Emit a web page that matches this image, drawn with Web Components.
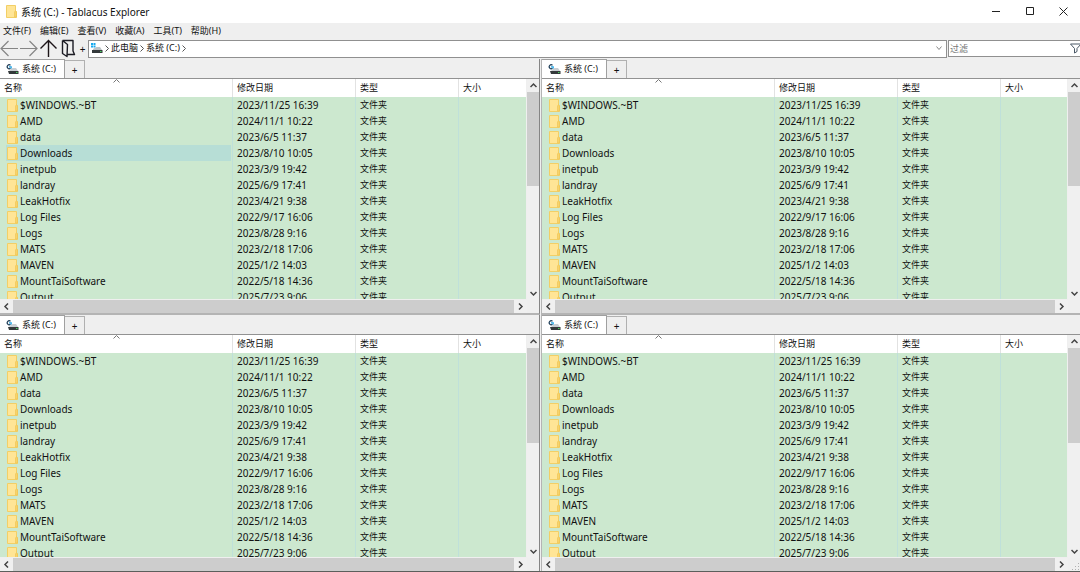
<!DOCTYPE html>
<html lang="zh-CN">
  <head>
    <meta charset="utf-8">
    <title>系统 (C:) - Tablacus Explorer</title>
    <style>
      html, body {
        height: 100%;
        margin: 0;
      }
      body {
        --face: #efefef;
        --line: #929292;
        --soft-line: #b4b4b4;
        --list: #cce8cf;
        --thumb: #cdcdcd;
        font: 9px/16px "Noto Sans", "Noto Sans CJK SC", sans-serif;
        color: #111;
        overflow: hidden;
      }
    </style>
  </head>
  <body>
    <template id="te-window-template">
      <style>
        :host {
          display: flex;
          flex-direction: column;
          height: 100vh;
          background: var(--face);
        }
        header {
          display: flex;
          align-items: center;
          height: 23px;
          padding-left: 6px;
          background: #fff;
        }
        h1 {
          flex: 1;
          margin: 0 0 0 4px;
          font-size: 10px;
          font-weight: normal;
        }
        button {
          width: 34px;
          height: 23px;
          padding: 0;
          border: 0;
          background: none;
        }
        button svg {
          display: block;
          margin: auto;
        }
        .panes {
          flex: 1;
          min-height: 0;
          display: grid;
          grid-template-columns: 1fr 1fr;
          grid-template-rows: 1fr 1fr;
          border-bottom: 1px solid #5c5f5c;
        }
      </style>
      <header>
        <te-icon name="folder"></te-icon>
        <h1><slot name="title"></slot></h1>
        <button aria-label="最小化"><svg width="9" height="9" viewBox="0 0 9 9"><path d="M1 4.5h8" stroke="#222"/></svg></button>
        <button aria-label="最大化"><svg width="9" height="9" viewBox="0 0 9 9"><path d="M1.500.5h7v7h-7z" fill="none" stroke="#222"/></svg></button>
        <button aria-label="关闭"><svg width="9" height="9" viewBox="0 0 9 9"><path d="M.5.5l8 8M8.500.5l-8 8" stroke="#222"/></svg></button>
      </header>
      <slot name="menu"></slot>
      <slot name="toolbar"></slot>
      <div class="panes"><slot></slot></div>
    </template>

    <template id="te-menubar-template">
      <style>
        :host { display: block; }
        nav {
          display: flex;
          gap: 9px;
          padding-left: 3px;
        }
        button {
          padding: 0;
          border: 0;
          background: none;
          font: inherit;
          color: inherit;
        }
      </style>
      <nav></nav>
    </template>

    <template id="te-toolbar-template">
      <style>
        :host {
          display: flex;
          align-items: flex-start;
          height: 20px;
        }
        button {
          padding: 0;
          border: 0;
          background: none;
          font: inherit;
          color: inherit;
        }
        .nav svg { display: block; }
        .plus {
          width: 11px;
          height: 19px;
          font-size: 10px;
        }
        .address {
          box-sizing: border-box;
          flex: 1;
          display: flex;
          align-items: center;
          height: 18px;
          margin-right: 1px;
          padding: 0 2px 2px 1px;
          border: 1px solid #909090;
          background: #fff;
        }
        a {
          color: inherit;
          text-decoration: none;
        }
        .address svg { margin: 0 2px; }
        .drop {
          margin-left: auto;
        }
        .filter {
          box-sizing: border-box;
          display: flex;
          align-items: center;
          width: 132px;
          height: 17px;
          border: 1px solid #909090;
          border-right: 0;
          background: #fff;
        }
        input {
          flex: 1;
          min-width: 0;
          padding: 0 1px;
          border: 0;
          background: none;
          font: inherit;
          outline: 0;
        }
        input::placeholder { color: #777; }
        .address, .filter { margin-top: 1px; }
      </style>
      <button class="nav" aria-label="后退"><svg width="20" height="19" viewBox="0 0 20 19"><path d="M8.500 2L1 9.500 8.500 17M1 9.500H18" fill="none" stroke="#858585" stroke-width="1.200"/></svg></button>
      <button class="nav" aria-label="前进"><svg width="19" height="19" viewBox="0 0 19 19"><path d="M9.500 2l7.500 7.500L9.500 17M17 9.500H0" fill="none" stroke="#858585" stroke-width="1.200"/></svg></button>
      <button class="nav" aria-label="向上"><svg width="20" height="19" viewBox="0 0 20 19"><path d="M1.500 9.500l8-8 8 8M9.500 1.500V18" fill="none" stroke="#1c1418" stroke-width="1.400"/></svg></button>
      <button class="nav" aria-label="文件夹"><svg width="18" height="19" viewBox="0 0 18 19"><path d="M3.500 1.500H14V12l1.500 3.500H8M3.500 1.500v13L8 17.500l.5-12-5-4" fill="none" stroke="#1c1c24" stroke-width="1.400" stroke-linejoin="round"/></svg></button>
      <button class="plus" aria-label="新建">+</button>
      <div class="address">
        <te-icon name="computer"></te-icon>
        <svg width="4" height="7" viewBox="0 0 4 7"><path d="M.5.5l3 3-3 3" fill="none" stroke="#555"/></svg>
        <a href="#pc">此电脑</a>
        <svg width="4" height="7" viewBox="0 0 4 7"><path d="M.5.5l3 3-3 3" fill="none" stroke="#555"/></svg>
        <a href="#c">系统 (C:)</a>
        <svg width="4" height="7" viewBox="0 0 4 7"><path d="M.5.5l3 3-3 3" fill="none" stroke="#555"/></svg>
        <button class="drop" aria-label="地址历史"><svg width="6" height="5" viewBox="0 0 6 5"><path d="M.5.5L3 3.500 5.500.5" fill="none" stroke="#888"/></svg></button>
      </div>
      <label class="filter">
        <input type="text" placeholder="过滤" aria-label="过滤">
        <svg width="10" height="11" viewBox="0 0 10 11"><path d="M.5 1h10.500L7 5.500V8.500L4.500 10V5.500z" fill="none" stroke="#4a5866"/></svg>
      </label>
    </template>

    <template id="te-icon-template">
      <style>
        :host { display: inline-block; }
        svg { display: block; }
      </style>
    </template>

    <template id="te-scrollbar-template">
      <style>
        :host {
          display: flex;
          background: #f0f0f0;
        }
        :host([vertical]) {
          flex-direction: column;
        }
        button {
          display: grid;
          place-items: center;
          width: 13px;
          height: 12px;
          padding: 0;
          border: 0;
          background: none;
        }
        :host([vertical]) button {
          width: 100%;
          height: 13px;
        }
        .track {
          flex: 1;
          display: flex;
          flex-direction: inherit;
        }
        .thumb {
          flex-basis: var(--size, 100%);
          background: var(--thumb);
        }
        path {
          fill: none;
          stroke: #444;
          stroke-width: 1.5;
        }
      </style>
      <button class="less"><svg width="7" height="7" viewBox="0 0 7 7"><path/></svg></button>
      <div class="track"><div class="thumb"></div></div>
      <button class="more"><svg width="7" height="7" viewBox="0 0 7 7"><path/></svg></button>
    </template>

    <template id="te-pane-template">
      <style>
        :host {
          display: flex;
          flex-direction: column;
          min-width: 0;
          min-height: 0;
          box-sizing: border-box;
          border-bottom: 2px solid var(--soft-line);
        }
        :host([side="left"]) {
          border-right: 1px solid #858585;
        }
        :host([side="right"]) {
          border-left: 1px solid var(--soft-line);
          margin-left: 1px;
        }
        :host([last]) {
          border-bottom: 0;
        }
        .tabs {
          display: flex;
          align-items: flex-end;
          height: 19px;
          border-bottom: 1px solid var(--line);
        }
        .tabs button {
          box-sizing: border-box;
          padding: 0;
          font: inherit;
          color: inherit;
        }
        .tab {
          display: flex;
          align-items: center;
          gap: 3px;
          width: 65px;
          height: 19px;
          border: solid #a0a0a0;
          border-width: 1px 1px 0 0;
          background: #fff;
        }
        .tabs .tab { padding-left: 6px; }
        .tabs .add {
          width: 20px;
          height: 18px;
          border: 1px solid #b0b0b0;
          border-left: 0;
          border-bottom: 0;
          background: var(--face);
          font-size: 10px;
        }
        .view {
          flex: 1;
          min-height: 0;
          display: grid;
          grid-template-columns: 1fr 12px;
          grid-template-rows: 1fr 13px;
        }
        .list {
          overflow: hidden;
          margin: 0 1px 1px 0;
          background: var(--list);
        }
        table {
          width: 100%;
          table-layout: fixed;
          border-collapse: separate;
          border-spacing: 0;
        }
        th, td { box-sizing: border-box; }
        .name { width: 233px; }
        .date { width: 123px; }
        .type { width: 103px; }
        th {
          position: relative;
          height: 18px;
          padding: 0 0 0 4px;
          border-right: 1px solid #e2e2e2;
          background: #fff;
          font-weight: normal;
          text-align: left;
        }
        th:last-child, td:last-child { border-right: 0; }
        .sort {
          position: absolute;
          top: 0;
          left: 50%;
          margin-left: -3px;
        }
        td {
          height: 16px;
          padding: 0 0 0 4px;
          border-right: 1px solid #bfe0da;
          white-space: nowrap;
        }
        td:first-child { padding: 0 1px 0 6px; }
        .latin { font-size: 10px; }
        .item {
          display: flex;
          align-items: center;
          gap: 2px;
          height: 16px;
          padding-left: 1px;
        }
        .item.on { background: #b7ded6; }
        .corner {
          display: flex;
          align-items: flex-end;
          justify-content: flex-end;
        }
      </style>
      <div class="tabs">
        <button class="tab"><te-icon name="drive"></te-icon><slot></slot></button>
        <button class="add" aria-label="新标签">+</button>
      </div>
      <div class="view">
        <div class="list">
          <table>
            <thead>
              <tr>
                <th class="name">名称<svg class="sort" width="7" height="4" viewBox="0 0 7 4"><path d="M.5 3.500l3-3 3 3" fill="none" stroke="#777"/></svg></th>
                <th class="date">修改日期</th>
                <th class="type">类型</th>
                <th>大小</th>
              </tr>
            </thead>
            <tbody></tbody>
          </table>
        </div>
        <te-scrollbar vertical style="--size: 48%"></te-scrollbar>
        <te-scrollbar></te-scrollbar>
        <div class="corner"></div>
      </div>
    </template>

    <te-window>
      <span slot="title">系统 (C:) - Tablacus Explorer</span>
      <te-menubar slot="menu" items="文件(F),编辑(E),查看(V),收藏(A),工具(T),帮助(H)"></te-menubar>
      <te-toolbar slot="toolbar"></te-toolbar>
      <te-pane side="left" selected="Downloads">系统 (C:)</te-pane>
      <te-pane side="right">系统 (C:)</te-pane>
      <te-pane side="left" last>系统 (C:)</te-pane>
      <te-pane side="right" last grip>系统 (C:)</te-pane>
    </te-window>

    <script>
      const FILES = [
        ['$WINDOWS.~BT', '2023/11/25 16:39'],
        ['AMD', '2024/11/1 10:22'],
        ['data', '2023/6/5 11:37'],
        ['Downloads', '2023/8/10 10:05'],
        ['inetpub', '2023/3/9 19:42'],
        ['landray', '2025/6/9 17:41'],
        ['LeakHotfix', '2023/4/21 9:38'],
        ['Log Files', '2022/9/17 16:06'],
        ['Logs', '2023/8/28 9:16'],
        ['MATS', '2023/2/18 17:06'],
        ['MAVEN', '2025/1/2 14:03'],
        ['MountTaiSoftware', '2022/5/18 14:36'],
        ['Output', '2025/7/23 9:06']
      ];

      const ICONS = {
        folder: '<svg width="11" height="13" viewBox="0 0 11 13"><path d="M.5.5h9v5l1 1.500v5.500H.5z" fill="#ffe596" stroke="#f2cf66"/><path d="M8.500 12V7l1-1.500 1 1.500v5z" fill="#f7d36c" stroke="#eec351" stroke-width=".6"/></svg>',
        drive: '<svg width="13" height="12" viewBox="0 0 13 12"><path d="M4.500 2.200A2 2 0 1 0 4.500 5.300" fill="none" stroke="#1b3a55" stroke-width="1.200"/><path d="M3 3.800h2.200v2" fill="none" stroke="#20a5e8" stroke-width="1.200"/><path d="M6.500 5H10l2 3H3.500V7z" fill="#c9ced2"/><path d="M2 8h10.500v3H3z" fill="#34393b"/><path d="M10 9h1.500v1H10z" fill="#48d75e"/></svg>',
        computer: '<svg width="13" height="12" viewBox="0 0 13 12"><path d="M1 1h2v2H1zM3.500 1h2v2h-2zM1 3.500h2v2H1zM3.500 3.500h2v2h-2z" fill="#17a9ee"/><path d="M6.500 5H10l2 3H3V7z" fill="#bcc2c6"/><path d="M2 8h10.500v3H2z" fill="#34393b"/><path d="M10 9h1.500v1H10z" fill="#48d75e"/></svg>'
      };

      const ARROWS = {
        left: 'M5 .5l-3 3 3 3',
        right: 'M2 .5l3 3-3 3',
        up: 'M.5 5l3-3 3 3',
        down: 'M.5 2l3 3 3-3'
      };

      class TeElement extends HTMLElement {
        constructor() {
          super();

          const shadowRoot = this.attachShadow({mode: 'open'});
          const t = document.querySelector(`#${this.localName}-template`);
          shadowRoot.appendChild(t.content.cloneNode(true));
        }
      }

      class TeIcon extends TeElement {
        connectedCallback() {
          this.shadowRoot.innerHTML += ICONS[this.getAttribute('name')];
        }
      }

      class TeMenubar extends TeElement {
        connectedCallback() {
          const nav = this.shadowRoot.querySelector('nav');
          for (const text of this.getAttribute('items').split(',')) {
            const button = document.createElement('button');
            button.textContent = text;
            nav.appendChild(button);
          }
        }
      }

      class TeScrollbar extends TeElement {
        connectedCallback() {
          const names = this.hasAttribute('vertical') ? ['up', 'down'] : ['left', 'right'];
          this.shadowRoot.querySelectorAll('button').forEach((button, i) => {
            button.setAttribute('aria-label', names[i]);
            button.querySelector('path').setAttribute('d', ARROWS[names[i]]);
          });
        }
      }

      class TePane extends TeElement {
        connectedCallback() {
          const selected = this.getAttribute('selected');
          this.shadowRoot.querySelector('tbody').innerHTML = FILES.map(([name, date]) => `
            <tr>
              <td class="latin"><div class="item${name === selected ? ' on' : ''}"><te-icon name="folder"></te-icon>${name}</div></td>
              <td class="latin">${date}</td>
              <td>文件夹</td>
              <td></td>
            </tr>`).join('');
          if (this.hasAttribute('grip')) {
            this.shadowRoot.querySelector('.corner').innerHTML =
              '<svg width="8" height="8" viewBox="0 0 8 8"><path d="M6 0h1v1H6zM3 3h1v1H3zM6 3h1v1H6zM0 6h1v1H0zM3 6h1v1H3zM6 6h1v1H6z" fill="#b0b0b0"/></svg>';
          }
        }
      }

      customElements.define('te-icon', TeIcon);
      customElements.define('te-menubar', TeMenubar);
      customElements.define('te-toolbar', class extends TeElement {});
      customElements.define('te-scrollbar', TeScrollbar);
      customElements.define('te-pane', TePane);
      customElements.define('te-window', class extends TeElement {});
    </script>
  </body>
</html>
